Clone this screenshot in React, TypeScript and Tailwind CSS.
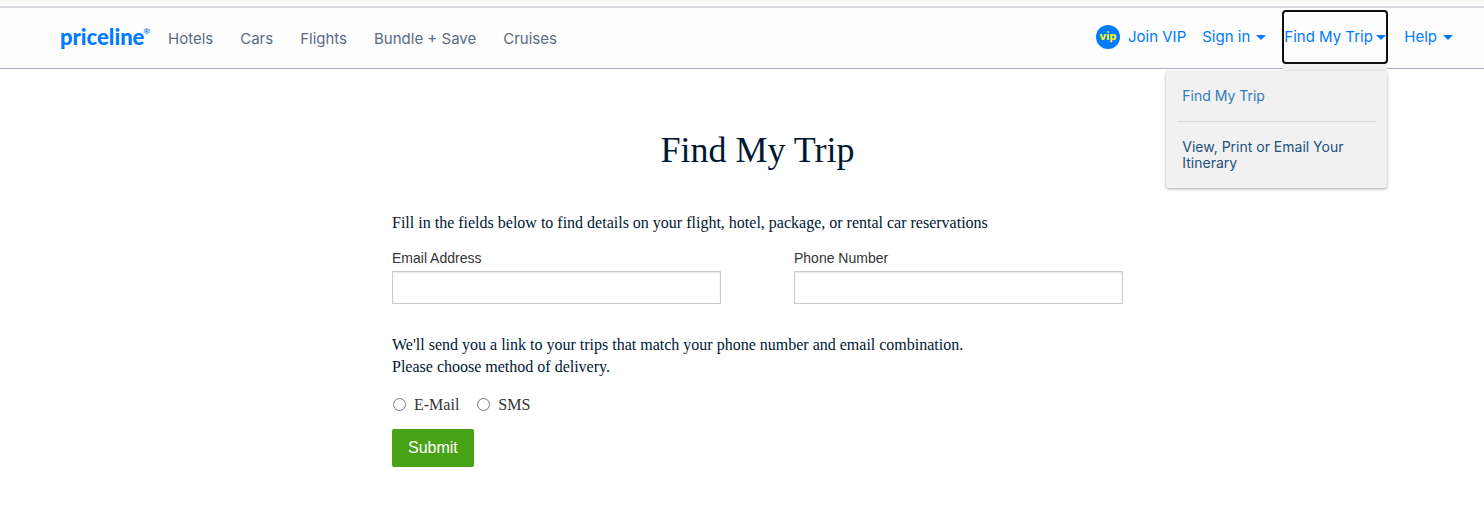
import React from "react";

const sections = ["Hotels", "Cars", "Flights", "Bundle + Save", "Cruises"];

function Caret() {
  return (
    <svg viewBox="0 0 10 5" className="h-[5px] w-[10px] shrink-0 fill-current" aria-hidden="true">
      <path d="M0 0h10L5 5z" />
    </svg>
  );
}

function Logo() {
  return (
    <a href="#home" className="flex items-start pb-0.5 font-[Lato,sans-serif] font-black text-[#007aff]">
      <span className="text-[22px] leading-6">priceline</span>
      <span className="-ml-px text-[8px] leading-3 font-bold">®</span>
    </a>
  );
}

function TripMenu() {
  return (
    <div className="relative h-[54px] w-[106px]">
      <button
        type="button"
        aria-expanded="true"
        className="flex h-full w-full items-center justify-between rounded-[4px] border-2 border-[#101010] whitespace-nowrap"
      >
        Find My Trip
        <Caret />
      </button>
      <div className="absolute top-full right-px z-10 w-[221px] text-sm leading-4">
        <div className="ml-auto h-[7px] w-[104px] bg-[#f1f1f1]" />
        <div className="rounded-[3px] bg-[#f1f1f1] px-[11px] shadow-[0_1px_3px_rgba(0,0,0,0.35)]">
          <a href="#trip" className="block border-b border-[#d3d3d3] px-[5px] pt-[17px] pb-[17px] text-[#337ab7]">
            Find My Trip
          </a>
          <a href="#itinerary" className="block px-[5px] pt-[17px] pb-[17px] text-[#23527c]">
            View, Print or Email Your Itinerary
          </a>
        </div>
      </div>
    </div>
  );
}

function Header() {
  return (
    <header className="border-b border-[#a8b2c0] bg-[#fdfdfe] font-[Inter,sans-serif] text-[15px] leading-5">
      <div className="flex h-[60px] items-center justify-between pr-[31px] pl-[60px]">
        <div className="flex items-center gap-[18px]">
          <Logo />
          <nav className="flex gap-[27px] pt-0.5 text-[#5b6b82]">
            {sections.map((name) => (
              <a key={name} href="#section" className="whitespace-nowrap">
                {name}
              </a>
            ))}
          </nav>
        </div>
        <div className="flex items-center gap-4 pb-0.5 text-[#007aff]">
          <a href="#vip" className="flex items-center gap-2 whitespace-nowrap">
            <span className="flex size-6 items-center justify-center rounded-full bg-[#007aff] pb-0.5 text-[11px] leading-4 font-extrabold text-[#f5f51e]">
              vip
            </span>
            Join VIP
          </a>
          <button type="button" className="flex items-center gap-1.5 whitespace-nowrap">
            Sign in
            <Caret />
          </button>
          <TripMenu />
          <button type="button" className="flex items-center gap-1.5 whitespace-nowrap">
            Help
            <Caret />
          </button>
        </div>
      </div>
    </header>
  );
}

function Field({ id, label, type }: { id: string; label: string; type: string }) {
  return (
    <div>
      <label htmlFor={id} className="block pb-[3px] font-['Liberation_Sans',sans-serif] text-sm leading-5 text-[#333333]">
        {label}
      </label>
      <input
        id={id}
        type={type}
        className="block h-[33px] w-full border border-[#cccccc] bg-white px-2 shadow-[inset_0_1px_2px_rgba(0,0,0,0.1)]"
      />
    </div>
  );
}

function Choice({ id, label }: { id: string; label: string }) {
  return (
    <div className="flex items-center">
      <input id={id} type="radio" name="delivery" className="mr-2 mb-0.5 ml-px size-[13px]" />
      <label htmlFor={id} className="text-base leading-6 text-[#333333]">
        {label}
      </label>
    </div>
  );
}

export default function App() {
  return (
    <div className="min-h-screen bg-white font-['Liberation_Serif',serif] text-[#001833]">
      <div className="h-2 border-t border-b-2 border-t-[#f2f2f2] border-b-[#dcdde3]" />
      <Header />
      <main className="pl-[31px]">
        <form className="mx-auto max-w-[731px] pt-[61px] pb-10">
          <h1 className="text-center text-4xl leading-10">Find My Trip</h1>
          <p className="pt-[42px] text-base leading-[22px]">
            Fill in the fields below to find details on your flight, hotel, package, or rental car reservations
          </p>
          <div className="grid grid-cols-2 gap-[73px] pt-[14px]">
            <Field id="email" label="Email Address" type="email" />
            <Field id="phone" label="Phone Number" type="tel" />
          </div>
          <p className="pt-[30px] text-base leading-[22px]">
            We'll send you a link to your trips that match your phone number and email combination.
            <br />
            Please choose method of delivery.
          </p>
          <div className="flex gap-[17px] pt-[15px]">
            <Choice id="by-email" label="E-Mail" />
            <Choice id="by-sms" label="SMS" />
          </div>
          <button
            type="submit"
            className="mt-3 block h-[38px] rounded-[2px] bg-[#48a216] px-4 font-['Liberation_Sans',sans-serif] text-base leading-6 text-white"
          >
            Submit
          </button>
        </form>
      </main>
    </div>
  );
}
